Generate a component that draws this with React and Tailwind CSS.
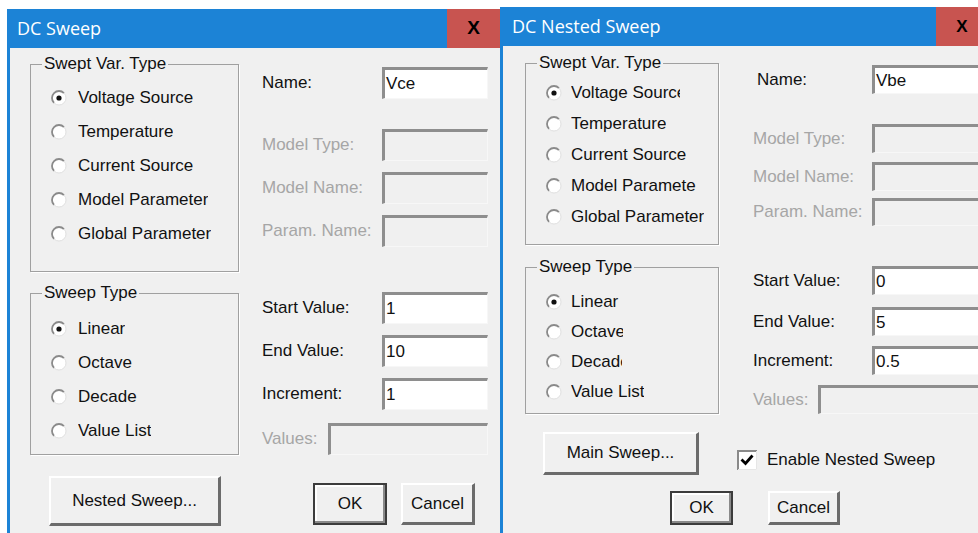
import React from "react";

const SANS = "font-['Liberation_Sans',Arial,sans-serif]";
const TITLE = "font-['Open_Sans','Noto_Sans',sans-serif]";

function Radio({ checked }) {
  return (
    <svg width="16" height="16" viewBox="0 0 16 16" className="shrink-0">
      <circle cx="8" cy="8" r="7" fill="#fff" />
      <path d="M3.05 12.95A7 7 0 0 1 12.95 3.05" fill="none" stroke="#8a8a8a" strokeWidth="1.8" />
      <path d="M3.05 12.95A7 7 0 0 0 12.95 3.05" fill="none" stroke="#e0e0e0" strokeWidth="1" />
      {checked && <circle cx="8" cy="8" r="2.6" fill="#111" />}
    </svg>
  );
}

function Check() {
  return (
    <svg width="20" height="20" viewBox="0 0 20 20" className="shrink-0">
      <rect x="0" y="0" width="20" height="20" fill="#fff" />
      <path d="M1 20V1H20" fill="none" stroke="#8a8a8a" strokeWidth="2" />
      <path d="M19.5 1V19.5H1" fill="none" stroke="#e6e6e6" strokeWidth="1" />
      <path d="M4.5 9.5L8.5 13.5L15.5 5.5" fill="none" stroke="#000" strokeWidth="2.8" />
    </svg>
  );
}

function RadioRow({ label, checked, row, gap, clip }) {
  return (
    <div className={`flex items-center ${row} ${gap}`}>
      <Radio checked={checked} />
      <span className={`whitespace-nowrap overflow-hidden ${clip || ""}`}>{label}</span>
    </div>
  );
}

function Box({ value, disabled, size }) {
  return (
    <div
      className={`${size} shrink-0 flex items-center pl-[1px] border-t-[3px] border-l-[3px] border-t-[#8e8e8e] border-l-[#8e8e8e] border-r border-b border-r-[#f7f7f7] border-b-[#f7f7f7] ${
        disabled ? "bg-[#f0f0f0]" : "bg-white"
      }`}
    >
      {value}
    </div>
  );
}

function Field({ label, value, disabled, top, labelW, size }) {
  return (
    <div className={`flex items-center ${top}`}>
      <span className={`${labelW} shrink-0 whitespace-nowrap ${disabled ? "text-[#a6a6a6]" : "text-[#111]"}`}>{label}</span>
      <Box value={value} disabled={disabled} size={size} />
    </div>
  );
}

const RAISED =
  "bg-[#f0f0f0] border-t-2 border-l-2 border-t-white border-l-white border-r-[3px] border-b-[3px] border-r-[#6b6b6b] border-b-[#6b6b6b] flex items-center justify-center";
const DEFAULT_BTN =
  "bg-[#f0f0f0] border-2 border-[#3c3c3c] shadow-[inset_-2px_-2px_0_#8a8a8a,inset_2px_2px_0_#fff] flex items-center justify-center";

function TitleBar({ title, pad, closeW, xSize }) {
  return (
    <div className="h-[39px] shrink-0 flex bg-[#1c83d6]">
      <div className={`flex-1 flex items-center ${pad} text-white text-[18px] ${TITLE}`}>{title}</div>
      <div className={`${closeW} bg-[#c85450] flex items-center justify-center font-bold ${xSize} text-black ${SANS}`}>
        X
      </div>
    </div>
  );
}

function SweepDialog() {
  return (
    <div className={`ml-[7px] mt-[9px] w-[493px] h-[540px] shrink-0 flex flex-col bg-[#f0f0f0] text-[17px] text-[#111] ${SANS}`}>
      <TitleBar title="DC Sweep" pad="pl-[10px]" closeW="w-[53px]" xSize="text-[19px]" />
      <div className="flex-1 flex border-l-[3px] border-[#1c83d6]">
        {/* option groups */}
        <div className="ml-[20px] w-[209px] shrink-0 flex flex-col">
          <fieldset className="mt-[6px] border border-[#a0a0a0] shadow-[1px_1px_0_#fff]">
            <legend className="ml-[11px] px-[2px] leading-[20px]">Swept Var. Type</legend>
            <div className="pl-[20px] pt-[7px] pb-[20px]">
              <RadioRow label="Voltage Source" checked row="h-[34px]" gap="gap-[11px]" />
              <RadioRow label="Temperature" row="h-[34px]" gap="gap-[11px]" />
              <RadioRow label="Current Source" row="h-[34px]" gap="gap-[11px]" />
              <RadioRow label="Model Parameter" row="h-[34px]" gap="gap-[11px]" />
              <RadioRow label="Global Parameter" row="h-[34px]" gap="gap-[11px]" />
            </div>
          </fieldset>
          <fieldset className="mt-[11px] border border-[#a0a0a0] shadow-[1px_1px_0_#fff]">
            <legend className="ml-[11px] px-[2px] leading-[20px]">Sweep Type</legend>
            <div className="pl-[20px] pt-[9px] pb-[6px]">
              <RadioRow label="Linear" checked row="h-[34px]" gap="gap-[11px]" />
              <RadioRow label="Octave" row="h-[34px]" gap="gap-[11px]" />
              <RadioRow label="Decade" row="h-[34px]" gap="gap-[11px]" />
              <RadioRow label="Value List" row="h-[34px]" gap="gap-[11px]" />
            </div>
          </fieldset>
          <button className={`mt-[21px] ml-[19px] w-[172px] h-[50px] ${RAISED}`}>Nested Sweep...</button>
        </div>

        {/* value fields */}
        <div className="ml-[23px] flex flex-col">
          <Field label="Name:" value="Vce" top="mt-[19px]" labelW="w-[120px]" size="w-[106px] h-[32px]" />
          <Field label="Model Type:" disabled top="mt-[30px]" labelW="w-[120px]" size="w-[106px] h-[32px]" />
          <Field label="Model Name:" disabled top="mt-[11px]" labelW="w-[120px]" size="w-[106px] h-[32px]" />
          <Field label="Param. Name:" disabled top="mt-[11px]" labelW="w-[120px]" size="w-[106px] h-[32px]" />
          <Field label="Start Value:" value="1" top="mt-[45px]" labelW="w-[120px]" size="w-[106px] h-[32px]" />
          <Field label="End Value:" value="10" top="mt-[11px]" labelW="w-[120px]" size="w-[106px] h-[32px]" />
          <Field label="Increment:" value="1" top="mt-[11px]" labelW="w-[120px]" size="w-[106px] h-[32px]" />
          <Field label="Values:" disabled top="mt-[13px]" labelW="w-[66px]" size="w-[160px] h-[32px]" />
          <div className="mt-[28px] ml-[51px] flex gap-[14px]">
            <button className={`w-[74px] h-[42px] ${DEFAULT_BTN}`}>OK</button>
            <button className={`w-[74px] h-[42px] ${RAISED}`}>Cancel</button>
          </div>
        </div>
      </div>
    </div>
  );
}

function NestedDialog() {
  return (
    <div className={`mt-[7px] w-[488px] h-[540px] shrink-0 flex flex-col bg-[#f0f0f0] text-[17px] text-[#111] ${SANS}`}>
      <TitleBar title="DC Nested Sweep" pad="pl-[12px]" closeW="w-[52px]" xSize="text-[17px]" />
      <div className="flex-1 flex flex-col border-l-[3px] border-[#1c83d6]">
        <div className="flex">
          {/* option groups */}
          <div className="ml-[22px] w-[194px] shrink-0 flex flex-col">
            <fieldset className="mt-[7px] border border-[#a0a0a0] shadow-[1px_1px_0_#fff]">
              <legend className="ml-[11px] px-[2px] leading-[20px]">Swept Var. Type</legend>
              <div className="pl-[20px] pt-[4px] pb-[12px]">
                <RadioRow label="Voltage Source" checked row="h-[31px]" gap="gap-[9px]" clip="w-[109px]" />
                <RadioRow label="Temperature" row="h-[31px]" gap="gap-[9px]" />
                <RadioRow label="Current Source" row="h-[31px]" gap="gap-[9px]" />
                <RadioRow label="Model Parameter" row="h-[31px]" gap="gap-[9px]" clip="w-[125px]" />
                <RadioRow label="Global Parameter" row="h-[31px]" gap="gap-[9px]" />
              </div>
            </fieldset>
            <fieldset className="mt-[12px] border border-[#a0a0a0] shadow-[1px_1px_0_#fff]">
              <legend className="ml-[11px] px-[2px] leading-[20px]">Sweep Type</legend>
              <div className="pl-[20px] pt-[10px] pb-[6px]">
                <RadioRow label="Linear" checked row="h-[30px]" gap="gap-[9px]" clip="w-[52px]" />
                <RadioRow label="Octave" row="h-[30px]" gap="gap-[9px]" clip="w-[52px]" />
                <RadioRow label="Decade" row="h-[30px]" gap="gap-[9px]" clip="w-[51px]" />
                <RadioRow label="Value List" row="h-[30px]" gap="gap-[9px]" />
              </div>
            </fieldset>
          </div>

          {/* value fields */}
          <div className="ml-[34px] flex flex-col">
            <Field label={<span className="pl-[4px]">Name:</span>} value="Vbe" top="mt-[19px]" labelW="w-[119px]" size="w-[112px] h-[29px]" />
            <Field label="Model Type:" disabled top="mt-[30px]" labelW="w-[119px]" size="w-[112px] h-[29px]" />
            <Field label="Model Name:" disabled top="mt-[9px]" labelW="w-[119px]" size="w-[112px] h-[29px]" />
            <Field label="Param. Name:" disabled top="mt-[7px]" labelW="w-[119px]" size="w-[112px] h-[28px]" />
            <Field label="Start Value:" value="0" top="mt-[40px]" labelW="w-[119px]" size="w-[112px] h-[29px]" />
            <Field label="End Value:" value="5" top="mt-[12px]" labelW="w-[119px]" size="w-[112px] h-[29px]" />
            <Field label="Increment:" value="0.5" top="mt-[10px]" labelW="w-[119px]" size="w-[112px] h-[29px]" />
            <Field label="Values:" disabled top="mt-[10px]" labelW="w-[65px]" size="w-[166px] h-[29px]" />
          </div>
        </div>

        <div className="mt-[18px] flex items-start">
          <button className={`ml-[40px] w-[156px] h-[43px] ${RAISED}`}>Main Sweep...</button>
          <label className="ml-[38px] mt-[15px] flex items-center gap-[10px]">
            <Check />
            <span className="whitespace-nowrap">Enable Nested Sweep</span>
          </label>
        </div>

        <div className="mt-[16px] flex">
          <button className={`ml-[167px] w-[63px] h-[34px] ${DEFAULT_BTN}`}>OK</button>
          <button className={`ml-[35px] w-[72px] h-[34px] ${RAISED}`}>Cancel</button>
        </div>
      </div>
    </div>
  );
}

export default function App() {
  return (
    <div className="w-[978px] h-[533px] overflow-hidden bg-white flex items-start">
      <SweepDialog />
      <NestedDialog />
    </div>
  );
}
